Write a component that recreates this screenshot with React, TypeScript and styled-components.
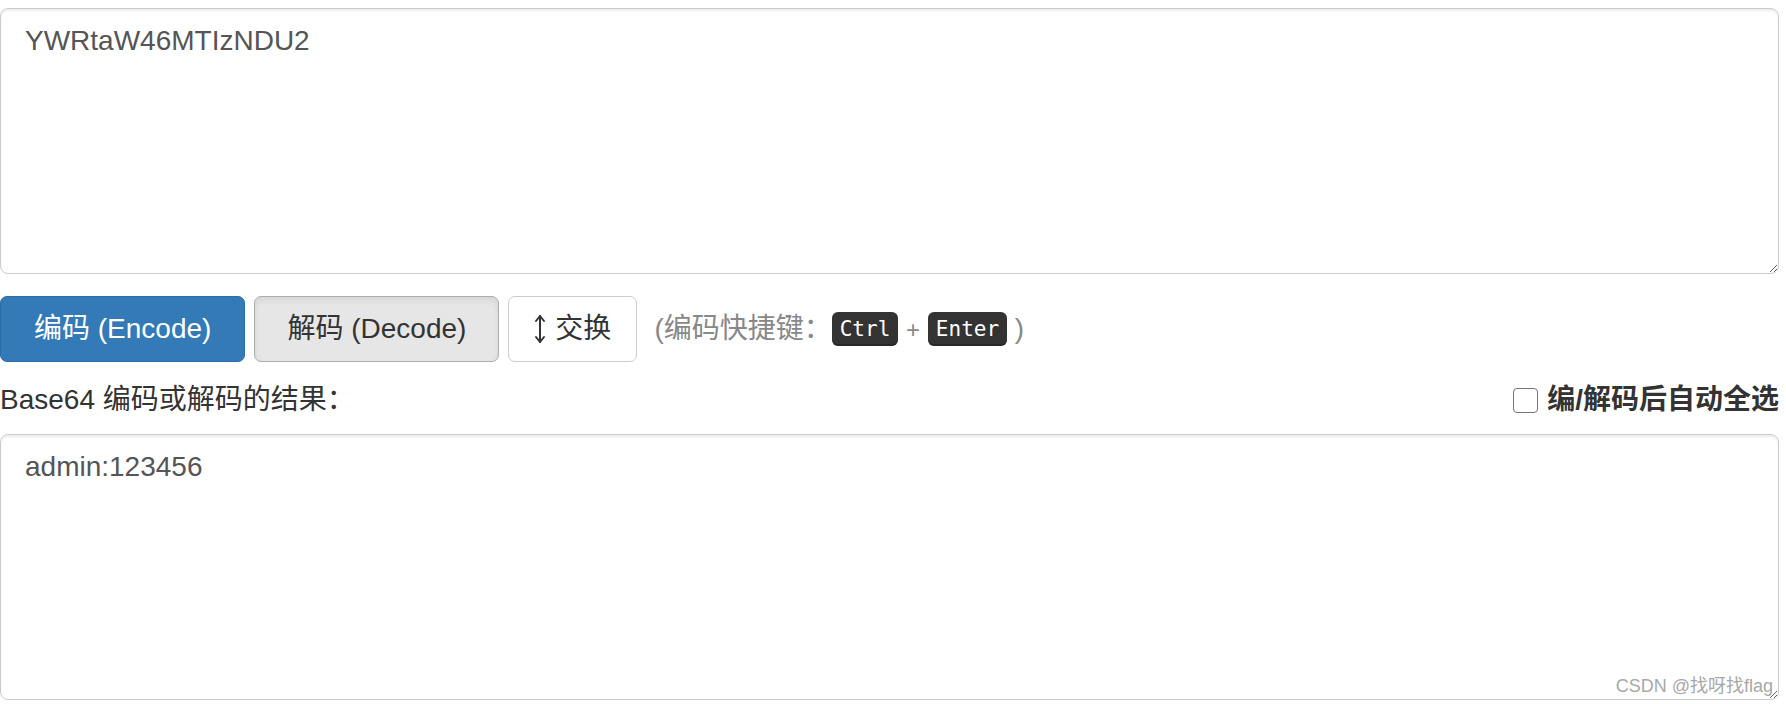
import styled, { createGlobalStyle } from 'styled-components';

const GlobalStyle = createGlobalStyle`
    html, body {
        margin: 0;
        padding: 0;
        background: #fff;
    }
    body {
        font-family: "Liberation Sans", "Noto Sans CJK SC", sans-serif;
        font-size: 28px;
        line-height: 40px;
        color: #333;
    }
    * {
        box-sizing: border-box;
    }
`

const Page = styled.div`
    padding: 8px 7px 0 0;
    width: 1786px;
`

const TextBox = styled.textarea`
    display: block;
    width: 100%;
    height: 266px;
    margin: 0;
    padding: 12px 24px;
    font-family: "Liberation Sans", "Noto Sans CJK SC", sans-serif;
    font-size: 28px;
    line-height: 40px;
    color: #555;
    background: #fff;
    border: 1px solid #ccc;
    border-radius: 8px;
    box-shadow: inset 0 2px 2px rgba(0, 0, 0, 0.075);
    resize: vertical;
    outline: none;
`

const Toolbar = styled.div`
    display: flex;
    align-items: center;
    gap: 9px;
    margin-top: 22px;
`

const Button = styled.button<{ $variant?: 'primary' | 'active' | 'plain'; $pad?: number }>`
    display: inline-flex;
    align-items: center;
    gap: 9px;
    height: 66px;
    padding: 12px ${p => p.$pad ?? 33}px;
    font-family: "Liberation Sans", "Noto Sans CJK SC", sans-serif;
    font-size: 28px;
    line-height: 40px;
    border-radius: 7px;
    cursor: pointer;
    color: ${p => (p.$variant === 'primary' ? '#fff' : '#333')};
    background: ${p => (p.$variant === 'primary' ? '#337ab7' : p.$variant === 'active' ? '#e6e6e6' : '#fff')};
    border: 1px solid ${p => (p.$variant === 'primary' ? '#2e6da4' : p.$variant === 'active' ? '#adadad' : '#ccc')};
    box-shadow: ${p => (p.$variant === 'active' ? 'inset 0 3px 6px rgba(0, 0, 0, 0.08)' : 'none')};
`

const Hint = styled.span`
    display: inline-block;
    margin-left: 8px;
    color: #888;
    white-space: pre;
`

const Plus = styled.span`
    font-size: 24px;
    color: #888;
`

const Kbd = styled.kbd`
    display: inline-block;
    height: 34px;
    padding: 0 8px;
    font-family: "DejaVu Sans Mono", "Liberation Mono", monospace;
    font-size: 21px;
    line-height: 34px;
    vertical-align: 2px;
    color: #fff;
    background: #333;
    border-radius: 6px;
    box-shadow: inset 0 -2px 0 rgba(0, 0, 0, 0.25);
`

const ResultHeader = styled.div`
    display: flex;
    justify-content: space-between;
    align-items: center;
    height: 40px;
    margin: 18px 0 14px;
`

const ResultLabel = styled.label`
    color: #333;
`

const AutoSelect = styled.label`
    display: flex;
    align-items: center;
    gap: 9px;
    font-weight: bold;
    color: #333;
`

const Check = styled.input`
    appearance: none;
    margin: 0;
    width: 25px;
    height: 25px;
    border: 1.5px solid #767676;
    border-radius: 4px;
    background: #fff;
`

const ResultWrap = styled.div`
    position: relative;
`

const Watermark = styled.span`
    position: absolute;
    right: 6px;
    bottom: 3px;
    font-family: "Liberation Sans", "Noto Sans CJK SC", sans-serif;
    font-size: 18px;
    line-height: 22px;
    color: #a8a8a8;
    pointer-events: none;
`

const SwapIcon = () => (
    <svg width="12" height="30" viewBox="0 0 12 30" fill="none" stroke="#333" strokeWidth="2" strokeLinecap="round" strokeLinejoin="round">
        <path d="M6 2 L6 28" />
        <path d="M2 7 L6 2 L10 7" />
        <path d="M2 23 L6 28 L10 23" />
    </svg>
);

export default function App() {
    return (
        <Page>
            <GlobalStyle />
            <TextBox defaultValue="YWRtaW46MTIzNDU2" />
            <Toolbar>
                <Button $variant="primary">编码 (Encode)</Button>
                <Button $variant="active" $pad={32}>解码 (Decode)</Button>
                <Button $variant="plain" $pad={25}>
                    <SwapIcon />
                    交换
                </Button>
                <Hint>
                    (编码快捷键：<Kbd>Ctrl</Kbd> <Plus>+</Plus> <Kbd>Enter</Kbd> )
                </Hint>
            </Toolbar>
            <ResultHeader>
                <ResultLabel>Base64 编码或解码的结果：</ResultLabel>
                <AutoSelect>
                    <Check type="checkbox" />
                    编/解码后自动全选
                </AutoSelect>
            </ResultHeader>
            <ResultWrap>
                <TextBox defaultValue="admin:123456" />
                <Watermark>CSDN @找呀找flag</Watermark>
            </ResultWrap>
        </Page>
    );
}
